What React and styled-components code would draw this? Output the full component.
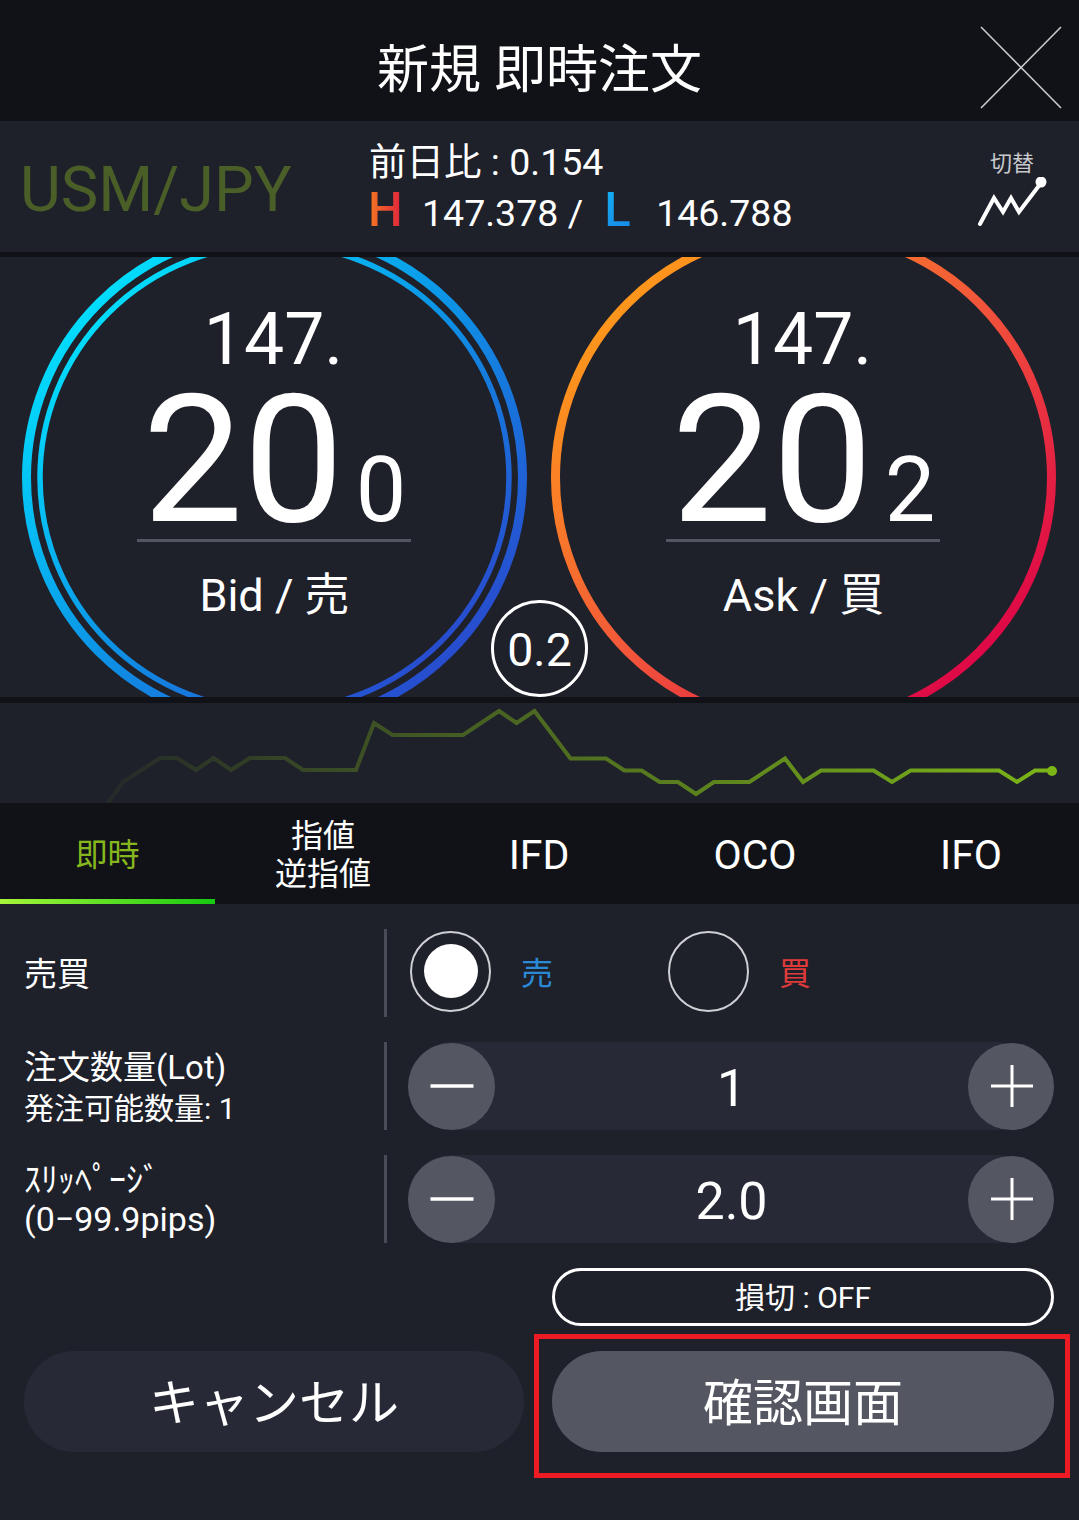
import React from "react";
import styled, { createGlobalStyle } from "styled-components";

const Global = createGlobalStyle`
  html, body { margin: 0; padding: 0; background: #1e202a; }
  body { font-family: Roboto, "Noto Sans CJK JP", sans-serif; color: #fff; }
  * { box-sizing: border-box; }
`;

const Page = styled.div`
  width: 1079px;
  height: 1520px;
  overflow: hidden;
  background: #1e202a;
`;

const Header = styled.header`
  height: 121px;
  background: #111217;
  position: relative;
  display: flex;
  align-items: center;
  justify-content: center;
  padding-top: 16px;
`;

const Title = styled.h1`
  margin: 0;
  font-size: 52px;
  font-weight: 400;
  line-height: 1;
  position: relative;
  top: 2px;
`;

const CloseIcon = styled.svg`
  position: absolute;
  left: 980px;
  top: 26px;
`;

const InfoBar = styled.section`
  height: 131px;
  display: grid;
  grid-template-columns: 348px 1fr 102px;
  align-items: center;
  padding-left: 20px;
`;

const Pair = styled.div`
  font-size: 63px;
  line-height: 1;
  color: #4a5e28;
  padding-top: 6px;
`;

const Stats = styled.div`
  font-size: 37.5px;
  line-height: 52px;
`;

const StatRow = styled.div`
  display: flex;
  align-items: baseline;
  white-space: pre;
`;

const ChangeRow = styled(StatRow)`
  padding-top: 5px;
  padding-left: 1px;
  line-height: 44px;
`;

const HiLo = styled.span`
  font-size: 49px;
  line-height: 52px;
  font-weight: 500;
  width: ${(p) => p.$w}px;
  margin-left: ${(p) => p.$ml || 0}px;
  background: ${(p) => p.$bg};
  -webkit-background-clip: text;
  background-clip: text;
  color: transparent;
`;

const Switcher = styled.div`
  display: flex;
  flex-direction: column;
  align-items: center;
  width: 70px;
  margin-left: 0;
  padding-top: 4px;
`;

const SwitchLabel = styled.span`
  font-size: 22px;
  line-height: 26px;
  color: #c8c9cc;
`;

const Strip = styled.div`
  height: ${(p) => p.$h}px;
  background: #111217;
`;

const Quotes = styled.section`
  position: relative;
  height: 440px;
  display: flex;
  align-items: center;
  gap: 24px;
  padding-left: 22px;
  overflow: hidden;
`;

const QuoteCircle = styled.div`
  position: relative;
  flex: 0 0 505px;
  height: 505px;
  display: flex;
  flex-direction: column;
  align-items: center;
  padding-top: 73px;
`;

const Ring = styled.svg`
  position: absolute;
  inset: 0;
`;

const BasePrice = styled.div`
  position: relative;
  font-size: 71.5px;
  line-height: 84px;
  margin-right: 2px;
`;

const PriceRow = styled.div`
  position: relative;
  width: 274px;
  height: 160px;
  margin-right: 1px;
  padding-top: 3px;
  padding-left: 1px;
  border-bottom: 3px solid #545661;
  display: flex;
  justify-content: center;
  align-items: baseline;
`;

const BigPrice = styled.span`
  font-size: 179px;
  line-height: 150px;
`;

const SmallPrice = styled.span`
  font-size: 90px;
  line-height: 150px;
  margin-left: 12px;
`;

const Side = styled.div`
  position: relative;
  font-size: 45px;
  line-height: 60px;
  margin-top: 24px;
`;

const Spread = styled.div`
  position: absolute;
  left: 491px;
  bottom: 0;
  width: 97px;
  height: 97px;
  padding-top: 3px;
  border-radius: 50%;
  border: 3px solid #fff;
  background: #1e202a;
  display: flex;
  align-items: center;
  justify-content: center;
  font-size: 46.5px;
  line-height: 1;
`;

const ChartPanel = styled.section`
  height: 100px;
  overflow: hidden;
`;

const Tabs = styled.nav`
  height: 101px;
  background: #111217;
  display: grid;
  grid-template-columns: 215px 216px 1fr 1fr 1fr;
`;

const Tab = styled.div`
  display: flex;
  align-items: center;
  justify-content: center;
  text-align: center;
  padding-top: 7px;
  font-size: ${(p) => (p.$latin ? 41 : 32)}px;
  line-height: 38px;
  color: ${(p) => (p.$active ? "#86b81e" : "#fff")};
  border-bottom: 5px solid transparent;
  border-image: ${(p) =>
    p.$active ? "linear-gradient(90deg, #a6f53a, #16c90f) 1" : "none"};
`;

const Form = styled.section`
  padding: 25px 25px 0 24px;
  display: flex;
  flex-direction: column;
  gap: 25px;
`;

const Row = styled.div`
  display: grid;
  grid-template-columns: 360px 1fr;
  height: 88px;
`;

const Label = styled.div`
  display: flex;
  flex-direction: column;
  justify-content: center;
  padding-top: 3px;
  font-size: 33px;
  line-height: 41px;
  white-space: nowrap;
`;

const SlipLabel = styled(Label)`
  font-size: 34px;
  line-height: 39px;
  padding-top: 2px;
`;

const SubLabel = styled.span`
  font-size: 30px;
`;

const Control = styled.div`
  border-left: 3px solid #4a4c58;
  padding-left: 21px;
  display: flex;
  align-items: center;
`;

const RadioGroup = styled(Control)`
  padding-left: 23px;
  padding-bottom: 4px;
`;

const RadioOption = styled.div`
  display: flex;
  align-items: center;
  width: 258px;
  gap: 30px;
  font-size: 32px;
  color: ${(p) => p.$color};
`;

const Radio = styled.span`
  width: 81px;
  height: 81px;
  border-radius: 50%;
  border: 2px solid #cfd0d4;
  display: flex;
  align-items: center;
  justify-content: center;
  &::after {
    content: "";
    width: 54px;
    height: 54px;
    border-radius: 50%;
    background: ${(p) => (p.$on ? "#fff" : "transparent")};
  }
`;

const Stepper = styled.div`
  width: 100%;
  height: 88px;
  border-radius: 44px 0 0 44px;
  background: linear-gradient(90deg, #272a36 92%, #1e202a 92%);
  display: flex;
  align-items: center;
  justify-content: space-between;
`;

const StepButton = styled.span`
  width: ${(p) => p.$w}px;
  height: 87px;
  border-radius: 50%;
  background: #545661;
  display: flex;
  align-items: center;
  justify-content: center;
`;

const StepValue = styled.span`
  font-size: 52px;
  line-height: 1;
  position: relative;
  top: 3px;
`;

const ToggleRow = styled.div`
  display: grid;
  grid-template-columns: 1fr 502px;
`;

const Toggle = styled.div`
  height: 58px;
  border: 3px solid #fff;
  border-radius: 29px;
  padding-bottom: 4px;
  display: flex;
  align-items: center;
  justify-content: center;
  font-size: 30px;
`;

const Actions = styled.div`
  display: grid;
  grid-template-columns: 500px 502px;
  justify-content: space-between;
`;

const ActionButton = styled.div`
  position: relative;
  height: 101px;
  border-radius: 50px;
  padding-bottom: 6px;
  background: ${(p) => (p.$primary ? "#545661" : "#272a36")};
  display: flex;
  align-items: center;
  justify-content: center;
  font-size: 50px;
  ${(p) =>
    p.$primary &&
    `&::after {
      content: "";
      position: absolute;
      left: -18px;
      right: -16px;
      top: -17px;
      bottom: -26px;
      border: 5px solid #ed1c24;
    }`}
`;

const RingDrawing = ({ id, stops, rings }) => (
  <Ring width="505" height="505" viewBox="0 0 505 505">
    <defs>
      <linearGradient id={id} x1="0.1" y1="0.1" x2="0.9" y2="0.9">
        {stops.map(([o, c]) => (
          <stop key={o} offset={o} stopColor={c} />
        ))}
      </linearGradient>
    </defs>
    {rings.map(([rx, ry, w]) => (
      <ellipse key={rx} cx="252.5" cy="252.5" rx={rx} ry={ry} fill="none" stroke={`url(#${id})`} strokeWidth={w} />
    ))}
  </Ring>
);

const chartPoints = [
  [108, 803], [123, 782], [160, 758], [177, 758], [196, 770], [213.5, 758], [231, 770],
  [250, 758], [285, 758], [303, 770], [356, 770], [374, 723], [392.5, 735], [463, 735],
  [499, 711], [516.5, 723], [534.5, 711], [570.5, 758.5], [606, 758.5], [624.4, 770.5],
  [641.6, 770.5], [659.6, 782], [678, 782], [696, 794], [713.9, 782], [749.4, 782],
  [785, 758.5], [803, 782], [821, 770.5], [873.6, 770.5], [892, 782], [910.6, 770.5],
  [999, 770.5], [1017, 782], [1035, 770.5], [1052, 770.5],
]
  .map(([x, y]) => `${x},${y - 703}`)
  .join(" ");

const Minus = () => (
  <svg width="44" height="6" viewBox="0 0 44 6">
    <path d="M0.5 3H43.5" stroke="#fff" strokeWidth="3.5" />
  </svg>
);

const Plus = () => (
  <svg width="42" height="42" viewBox="0 0 42 42" style={{ marginLeft: 2 }}>
    <path d="M0 21H42M21 0V42" stroke="#fff" strokeWidth="3" />
  </svg>
);

const StepperControl = ({ value }) => (
  <Stepper>
    <StepButton $w={87}><Minus /></StepButton>
    <StepValue>{value}</StepValue>
    <StepButton $w={86}><Plus /></StepButton>
  </Stepper>
);

export default function App() {
  return (
    <Page>
      <Global />
      <Header>
        <Title>新規 即時注文</Title>
        <CloseIcon width="82" height="83" viewBox="0 0 82 83">
          <path d="M1 1L81 82M81 1L1 82" stroke="#c8c9cc" strokeWidth="1.6" fill="none" />
        </CloseIcon>
      </Header>

      <InfoBar>
        <Pair>USM/JPY</Pair>
        <Stats>
          <ChangeRow>前日比 : 0.154</ChangeRow>
          <StatRow>
            <HiLo $w={54} $bg="linear-gradient(90deg, #f47a22, #e0283a 60%)">H</HiLo>
            147.378 /
            <HiLo $w={52} $ml={21} $bg="linear-gradient(160deg, #12b4f0, #1a7fe8)">L</HiLo>
            146.788
          </StatRow>
        </Stats>
        <Switcher>
          <SwitchLabel>切替</SwitchLabel>
          <svg width="70" height="50" viewBox="0 0 70 50">
            <path d="M3 47L17 21L26 35L34 21L42 35L64 6" fill="none" stroke="#fff" strokeWidth="4" strokeLinecap="round" strokeLinejoin="miter" />
            <circle cx="64" cy="5" r="5.5" fill="#fff" />
          </svg>
        </Switcher>
      </InfoBar>
      <Strip $h={5} />

      <Quotes>
        <QuoteCircle>
          <RingDrawing
            id="bid"
            stops={[[0, "#00e4ff"], [0.5, "#0d93e6"], [1, "#2a45cc"]]}
            rings={[[248, 247, 9], [234.5, 233, 5.5]]}
          />
          <BasePrice>147.</BasePrice>
          <PriceRow>
            <BigPrice>20</BigPrice>
            <SmallPrice>0</SmallPrice>
          </PriceRow>
          <Side>Bid / 売</Side>
        </QuoteCircle>
        <QuoteCircle>
          <RingDrawing
            id="ask"
            stops={[[0, "#ff9d18"], [0.5, "#f2563a"], [1, "#dc0048"]]}
            rings={[[248, 247, 9]]}
          />
          <BasePrice>147.</BasePrice>
          <PriceRow>
            <BigPrice>20</BigPrice>
            <SmallPrice>2</SmallPrice>
          </PriceRow>
          <Side>Ask / 買</Side>
        </QuoteCircle>
        <Spread>0.2</Spread>
      </Quotes>
      <Strip $h={6} />

      <ChartPanel>
        <svg width="1079" height="100" viewBox="0 0 1079 100">
          <defs>
            <linearGradient id="line" gradientUnits="userSpaceOnUse" x1="90" y1="0" x2="1052" y2="0">
              <stop offset="0" stopColor="#7cb518" stopOpacity="0.05" />
              <stop offset="1" stopColor="#7cb518" stopOpacity="1" />
            </linearGradient>
          </defs>
          <polyline points={chartPoints} fill="none" stroke="url(#line)" strokeWidth="4" />
          <circle cx="1052" cy="68" r="5" fill="#7cb518" />
        </svg>
      </ChartPanel>

      <Tabs>
        <Tab $active>即時</Tab>
        <Tab>指値<br />逆指値</Tab>
        <Tab $latin>IFD</Tab>
        <Tab $latin>OCO</Tab>
        <Tab $latin>IFO</Tab>
      </Tabs>

      <Form>
        <Row>
          <Label>売買</Label>
          <RadioGroup>
            <RadioOption $color="#2a8ad8"><Radio $on />売</RadioOption>
            <RadioOption $color="#e03a3a"><Radio />買</RadioOption>
          </RadioGroup>
        </Row>
        <Row>
          <Label>
            注文数量(Lot)
            <SubLabel>発注可能数量: 1</SubLabel>
          </Label>
          <Control><StepperControl value="1" /></Control>
        </Row>
        <Row>
          <SlipLabel>
            <span>ｽﾘｯﾍﾟｰｼﾞ</span>
            <span>(0−99.9pips)</span>
          </SlipLabel>
          <Control><StepperControl value="2.0" /></Control>
        </Row>
        <ToggleRow>
          <span />
          <Toggle>損切 : OFF</Toggle>
        </ToggleRow>
        <Actions>
          <ActionButton>キャンセル</ActionButton>
          <ActionButton $primary>確認画面</ActionButton>
        </Actions>
      </Form>
    </Page>
  );
}
